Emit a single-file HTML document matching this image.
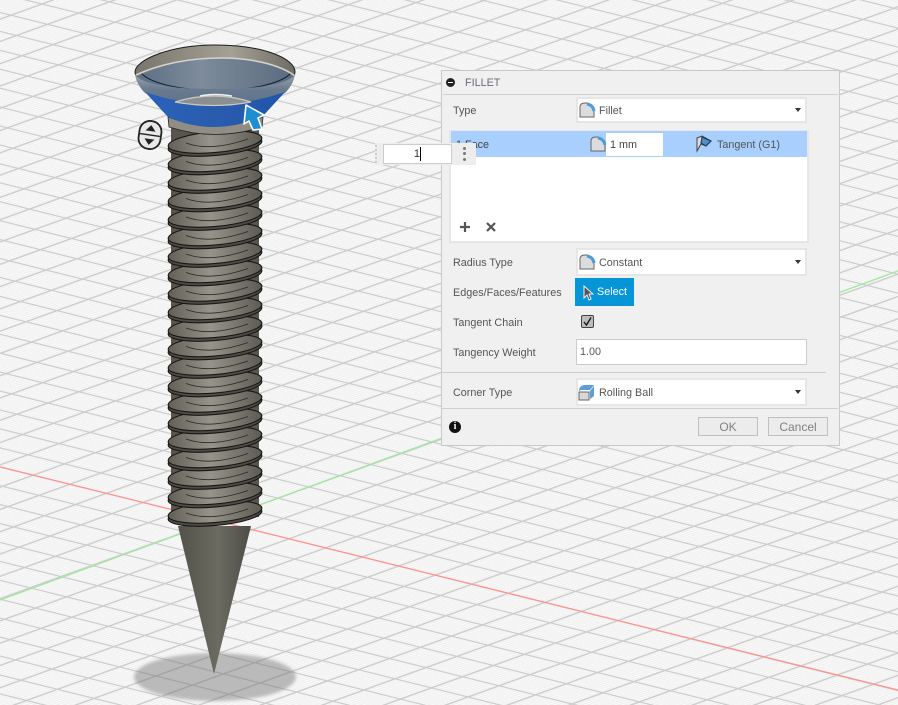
<!DOCTYPE html>
<html><head><meta charset="utf-8"><style>
html,body{margin:0;padding:0}
body{width:898px;height:705px;overflow:hidden;position:relative;background:#f6f6f6;font-family:"Liberation Sans",sans-serif;font-size:10.8px;color:#555}
svg.bg{position:absolute;left:0;top:0}
.p{position:absolute;box-sizing:border-box}
.panel{left:441px;top:70px;width:399px;height:376px;background:#f0f0f0;border:1px solid #c8c8c8;border-width:1.500px}
.lab{position:absolute;left:453px;line-height:14px;white-space:nowrap;margin-top:1px}
.sel{position:absolute;left:576px;width:231px;background:#fff;border:2px solid #e6e6e6;box-sizing:border-box}
.sel span{position:absolute;left:21px;top:50%;margin-top:-6px;line-height:14px}
.sel i{position:absolute;right:4px;top:50%;margin-top:-2px;border:3.500px solid transparent;border-top:4px solid #333;border-bottom:0}
.ic{position:absolute}
.btn{position:absolute;top:417px;width:60px;height:19px;box-sizing:border-box;background:#ececec;border:1px solid #c0c0c0;text-align:center;line-height:18px;font-size:12px;color:#808080}
</style></head><body>
<svg class="bg" width="898" height="705" viewBox="0 0 898 705">
<defs>
<pattern id="grid" width="100" height="100" patternUnits="userSpaceOnUse" patternTransform="matrix(.365 .091 -.31 .112 216 520.6)">
<rect width="100" height="100" fill="#f9f9f9"/>
<path d="M0 10H100M0 20H100M0 30H100M0 40H100M0 50H100M0 60H100M0 70H100M0 80H100M0 90H100" stroke="#eeeeee" stroke-width="2.4" fill="none"/>
<path d="M10 0V100M20 0V100M30 0V100M40 0V100M50 0V100M60 0V100M70 0V100M80 0V100M90 0V100" stroke="#eeeeee" stroke-width="2.1" fill="none"/>
<path d="M0 0H100M0 100H100" stroke="#cdcdcd" stroke-width="7" fill="none"/>
<path d="M0 0V100M100 0V100" stroke="#cdcdcd" stroke-width="7" fill="none"/>
</pattern>
<linearGradient id="th" x1="0" x2="1" y1="0" y2="0"><stop offset="0" stop-color="#625f57"/><stop offset=".45" stop-color="#96948a"/><stop offset="1" stop-color="#5c5a52"/></linearGradient>
<linearGradient id="co" x1="0" x2="1" y1="0" y2="0"><stop offset="0" stop-color="#53524a"/><stop offset=".55" stop-color="#6c6b61"/><stop offset="1" stop-color="#4d4c45"/></linearGradient>
<linearGradient id="rim" x1="0" x2="1" y1="0" y2="0"><stop offset="0" stop-color="#77756e"/><stop offset=".6" stop-color="#a5a094"/><stop offset="1" stop-color="#6e6c66"/></linearGradient>
<linearGradient id="dish" x1="0" x2="1" y1="0" y2="0"><stop offset="0" stop-color="#5e6f85"/><stop offset=".4" stop-color="#7d8b9b"/><stop offset="1" stop-color="#5c6c80"/></linearGradient>
<linearGradient id="glass" x1="0" x2="0" y1="0" y2="1"><stop offset="0" stop-color="#9aa3ad"/><stop offset=".5" stop-color="#6a7b90"/><stop offset="1" stop-color="#5f7288"/></linearGradient>
<linearGradient id="blue" x1="0" x2="1" y1="0" y2="0"><stop offset="0" stop-color="#2a62ba"/><stop offset=".5" stop-color="#2a5cad"/><stop offset="1" stop-color="#1f56ac"/></linearGradient>
<filter id="b"><feGaussianBlur stdDeviation="1.500"/></filter>
<g id="t">
<ellipse cx="215" cy="3" rx="47" ry="10.500" transform="rotate(-5 215 3)" fill="#4e4c46" stroke="#161614" stroke-width="1.100"/>
<ellipse cx="215" cy="0" rx="47" ry="10.500" transform="rotate(-5 215 0)" fill="url(#th)" stroke="#161614" stroke-width="1.100"/>
<path d="M186 1Q210 10 248 -3" fill="none" stroke="#2a2a26" stroke-width=".8"/>
</g>
</defs>
<rect width="898" height="705" fill="url(#grid)"/>
<path d="M0 467L898 690" stroke="#ff9090" stroke-width="1.2"/>
<path d="M0 600L898 271" stroke="#9ee89e" stroke-width="1.2"/>
<ellipse cx="215" cy="677" rx="81" ry="24" fill="#6a6a6a" fill-opacity=".42" filter="url(#b)"/>
<path d="M178 526L251 526L214 674Z" fill="url(#co)"/>
<rect x="171" y="125" width="88" height="392" fill="#57554e"/>
<use href="#t" y="512"/><use href="#t" y="493.500"/><use href="#t" y="475"/><use href="#t" y="456.500"/><use href="#t" y="438"/><use href="#t" y="419.500"/><use href="#t" y="401"/><use href="#t" y="382.500"/><use href="#t" y="364"/><use href="#t" y="345.500"/><use href="#t" y="327"/><use href="#t" y="308.500"/><use href="#t" y="290"/><use href="#t" y="271.500"/><use href="#t" y="253"/><use href="#t" y="234.500"/><use href="#t" y="216"/><use href="#t" y="197.500"/><use href="#t" y="179"/><use href="#t" y="160.500"/><use href="#t" y="142"/>
<path d="M168 117Q215 134 263 117L262 127Q215 142 169 127Z" fill="#8f8d84" stroke="#222" stroke-width=".8"/>
<path d="M135 72C135 60 170 45 215 45C262 45 295 58 295 72C295 84 260 95 215 95C170 95 135 84 135 72Z" fill="url(#rim)" stroke="#1d1d1b" stroke-width="1"/>
<path d="M139 76C160 66 190 58 222 58C255 58 280 66 292 76L285 93L145 93Z" fill="url(#dish)"/>
<path d="M141 73C162 96 270 96 291 73" fill="none" stroke="#10223c" stroke-width="1"/>
<path d="M136 75C160 64 190 58 222 58C255 58 282 66 295 76" fill="none" stroke="#d6d4cc" stroke-width="1.6"/>
<path d="M135 74C142 86 180 89 215 89C250 89 288 86 295 74C294 82 290 88 285 93Q250 105 215 105Q180 105 145 93C140 88 136 82 135 74Z" fill="url(#glass)"/>
<path d="M145 92Q180 104 215 104Q250 104 285 92L262 117Q212 137 168 117Z" fill="url(#blue)"/>
<path d="M175 102Q214 90 251 102Q214 109 175 102Z" fill="#8a9090" stroke="#c8c8c4" stroke-width="1.2"/>
<path d="M200 96Q214 93 232 96" stroke="#eef2f6" stroke-width="1.5" fill="none"/>
<path d="M246 105L264 115L258 118L262 129L253 130L249 121L244 124Z" fill="#1c8ed1" stroke="#fff" stroke-width="1.6" stroke-linejoin="round"/>
<g transform="rotate(8 150 135)">
<rect x="139" y="121" width="22" height="28" rx="10.500" fill="#e8e8e8" stroke="#222" stroke-width="1.8"/>
<path d="M140 135H160" stroke="#222" stroke-width="1.4"/>
<path d="M150 125L155 131H145Z" fill="#222"/>
<path d="M150 145L155 139H145Z" fill="#222"/>
</g>
</svg>

<div class="p panel"></div>
<div class="p" style="left:443px;top:94px;width:395px;height:1px;background:#d0d0d0"></div>
<div class="p" style="left:446px;top:78px;width:9px;height:9px;border-radius:50%;background:#222"></div>
<div class="p" style="left:448px;top:82px;width:5px;height:1px;background:#fff"></div>
<div class="lab" style="left:465px;top:75px;color:#6a6a7a">FILLET</div>

<div class="lab" style="top:103px">Type</div>
<div class="sel" style="top:97px;height:26px"><span>Fillet</span><i></i></div>
<svg class="ic" style="left:579px;top:102px" width="17" height="16" viewBox="0 0 17 16"><path d="M1 15V5Q1 1 6 1Q15 1 15 10V15Z" fill="#dcdcdc" stroke="#666"/><path d="M8 2Q14 3 15 9" fill="none" stroke="#4f9bd6" stroke-width="3"/></svg>

<div class="p" style="left:449px;top:130px;width:360px;height:113px;background:#fff;border:2px solid #e6e6e6"></div>
<div class="p" style="left:451px;top:131px;width:356px;height:26px;background:#a8cffd"></div>
<div class="lab" style="left:456px;top:137px;color:#444">1 Face</div>
<svg class="ic" style="left:590px;top:136px" width="17" height="16" viewBox="0 0 17 16"><path d="M1 15V5Q1 1 6 1Q15 1 15 10V15Z" fill="#dcdcdc" stroke="#666"/><path d="M8 2Q14 3 15 9" fill="none" stroke="#4f9bd6" stroke-width="3"/></svg>
<div class="p" style="left:606px;top:133px;width:57px;height:23px;background:#fff;line-height:24px;padding-left:4px;color:#444">1 mm</div>
<svg class="ic" style="left:696px;top:135px" width="18" height="18" viewBox="0 0 18 18"><path d="M1 3L6 1L15 6L10 11L5 9L1 16Z" fill="#dcdcdc" stroke="#444"/><path d="M6 2L15 6L10 11L5 8Z" fill="#4f8fc8" stroke="#234"/></svg>
<div class="lab" style="left:717px;top:137px;color:#555">Tangent (G1)</div>
<svg class="ic" style="left:459px;top:221px" width="40" height="12" viewBox="0 0 40 12"><path d="M6 1V11M1 6H11" stroke="#555" stroke-width="2.2"/><path d="M28 2L36 10M36 2L28 10" stroke="#555" stroke-width="2.2"/></svg>

<div class="lab" style="top:255px">Radius Type</div>
<div class="sel" style="top:248px;height:28px"><span style="left:21px">Constant</span><i></i></div>
<svg class="ic" style="left:579px;top:254px" width="17" height="16" viewBox="0 0 17 16"><path d="M1 15V5Q1 1 6 1Q15 1 15 10V15Z" fill="#dcdcdc" stroke="#666"/><path d="M8 2Q14 3 15 9" fill="none" stroke="#4f9bd6" stroke-width="3"/></svg>

<div class="lab" style="top:285px">Edges/Faces/Features</div>
<div class="p" style="left:575px;top:278px;width:59px;height:28px;background:#0696d7;color:#fff;line-height:29px;padding-left:22px">Select</div>
<svg class="ic" style="left:582px;top:285px" width="12" height="16" viewBox="0 0 12 16"><path d="M2 1V13L5 10L7 15L9 14L7 9H11Z" fill="#555" stroke="#eee"/></svg>

<div class="lab" style="top:315px">Tangent Chain</div>
<div class="p" style="left:581px;top:315px;width:13px;height:13px;background:#bdbdbd;border:1px solid #444;border-radius:2px"></div>
<svg class="ic" style="left:581px;top:315px" width="13" height="13" viewBox="0 0 13 13"><path d="M3 7L5.500 10L10 2.500" fill="none" stroke="#111" stroke-width="1.3"/></svg>

<div class="lab" style="top:345px">Tangency Weight</div>
<div class="p" style="left:576px;top:339px;width:231px;height:26px;background:#fff;border:1px solid #ccc;line-height:25px;padding-left:3px">1.00</div>
<div class="p" style="left:442px;top:372px;width:384px;height:1px;background:#ccc"></div>

<div class="lab" style="top:385px">Corner Type</div>
<div class="sel" style="top:378px;height:28px"><span>Rolling Ball</span><i></i></div>
<svg class="ic" style="left:578px;top:383px" width="18" height="18" viewBox="0 0 18 18"><path d="M1 9H11V17H1Z" fill="#d8d8d8" stroke="#666"/><path d="M1 8Q1 3 6 2H16L12 7H3ZM12 8L16 3V13L12 16Z" fill="#5b9fd6"/></svg>

<div class="p" style="left:442px;top:408px;width:396px;height:1px;background:#d0d0d0"></div>
<div class="p" style="left:449px;top:421px;width:12px;height:12px;border-radius:50%;background:#111;color:#fff;font:bold 10px/12px 'Liberation Serif',serif;text-align:center">i</div>
<div class="btn" style="left:698px">OK</div>
<div class="btn" style="left:768px">Cancel</div>

<div class="p" style="left:375px;top:143px;width:101px;height:22px;background:#ededed"></div>
<div class="p" style="left:383px;top:144px;width:69px;height:20px;background:#fff;border:1px solid #ccc;text-align:right;padding-right:31px;line-height:18px;color:#333;font-size:11px">1</div>
<div class="p" style="left:420px;top:147px;width:1px;height:14px;background:#000"></div>
<div class="p" style="left:463px;top:147px;width:3px;height:3px;border-radius:50%;background:#777;box-shadow:0 5px 0 #777,0 11px 0 #777"></div>
<div class="p" style="left:375px;top:145px;width:3px;height:18px;border-left:2px dotted #ccc"></div>
</body></html>
